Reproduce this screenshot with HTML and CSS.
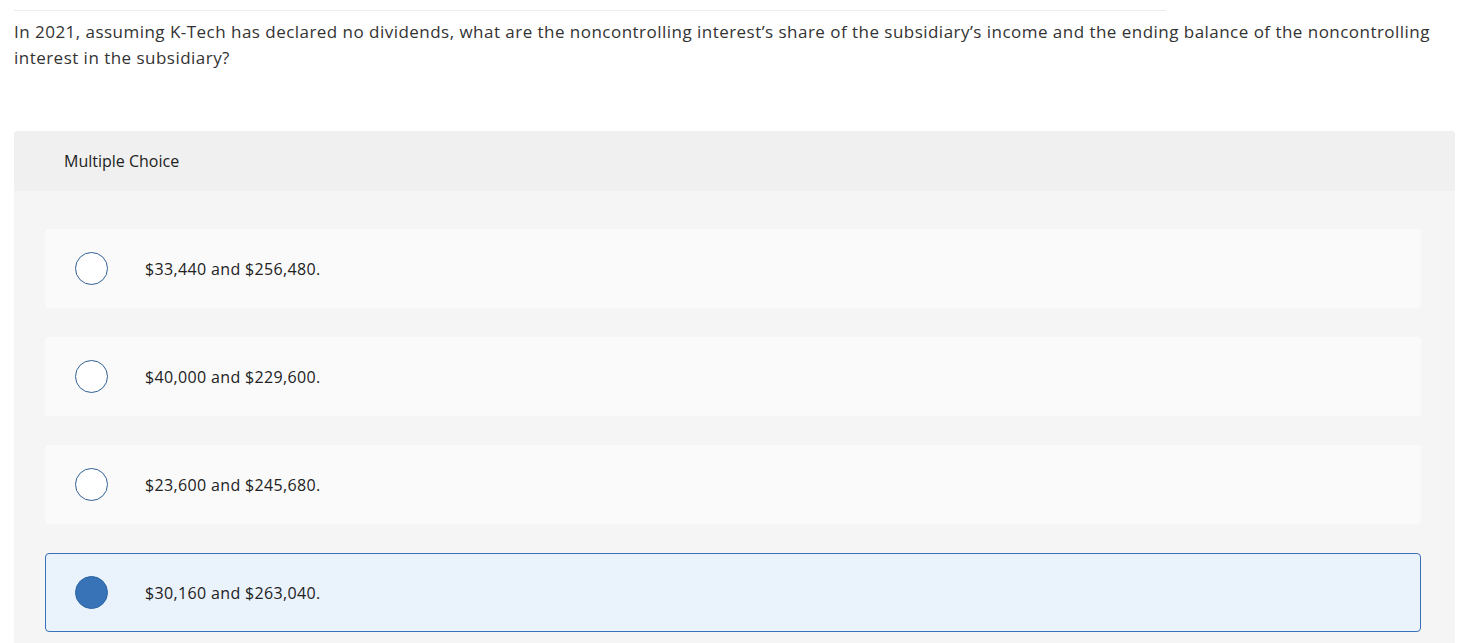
FILE: index.html
```html
<!DOCTYPE html>
<html>
<head>
<meta charset="utf-8">
<link rel="stylesheet" href="styles.css">
</head>
<body>
<div class="page">
  <div class="rule"></div>
  <p class="question">In 2021, assuming K-Tech has declared no dividends, what are the noncontrolling interest’s share of the subsidiary’s income and the ending balance of the noncontrolling interest in the subsidiary?</p>
  <div class="card">
    <div class="card-head">Multiple Choice</div>
    <div class="card-body">
      <div class="option"><span class="radio"></span><span class="label">$33,440 and $256,480.</span></div>
      <div class="option"><span class="radio"></span><span class="label">$40,000 and $229,600.</span></div>
      <div class="option"><span class="radio"></span><span class="label">$23,600 and $245,680.</span></div>
      <div class="option selected"><span class="radio"></span><span class="label">$30,160 and $263,040.</span></div>
    </div>
  </div>
</div>
</body>
</html>
```
FILE: styles.css
```css
html, body {
  margin: 0;
  padding: 0;
  background: #ffffff;
}
body {
  font-family: "Open Sans", Lato, sans-serif;
  color: #333;
}
.page {
  padding: 10px 16px 0 14px;
}
.rule {
  width: 1152px;
  height: 1px;
  background: #ececec;
}
.question {
  margin: 8px 0 0 0;
  font-size: 17px;
  line-height: 26px;
  letter-spacing: 0.47px;
  color: #333;
  padding-right: 20px;
}
.card {
  margin-top: 60px;
  border-radius: 4px 4px 0 0;
  background: #f5f5f5;
  overflow: hidden;
}
.card-head {
  height: 60px;
  display: flex;
  align-items: center;
  padding-left: 50px;
  background: #f0f0f0;
  font-size: 16px;
  color: #222;
}
.card-body {
  padding: 38px 34px 20px 31px;
  display: flex;
  flex-direction: column;
  gap: 29px;
}
.option {
  height: 79px;
  box-sizing: border-box;
  background: #fafafa;
  border-radius: 4px;
  display: flex;
  align-items: center;
  padding-left: 29px;
  border: 1px solid transparent;
}
.radio {
  width: 33px;
  height: 33px;
  box-sizing: border-box;
  border: 1.5px solid #2f5f94;
  border-radius: 50%;
  background: #fff;
  flex: none;
}
.label {
  margin-left: 37px;
  font-size: 16px;
  letter-spacing: 0.35px;
  color: #222;
}
.option.selected {
  background: #eaf2fb;
  border-color: #3a72b8;
}
.option.selected .radio {
  background: #3873b8;
  border-color: #2b63a3;
}
```
